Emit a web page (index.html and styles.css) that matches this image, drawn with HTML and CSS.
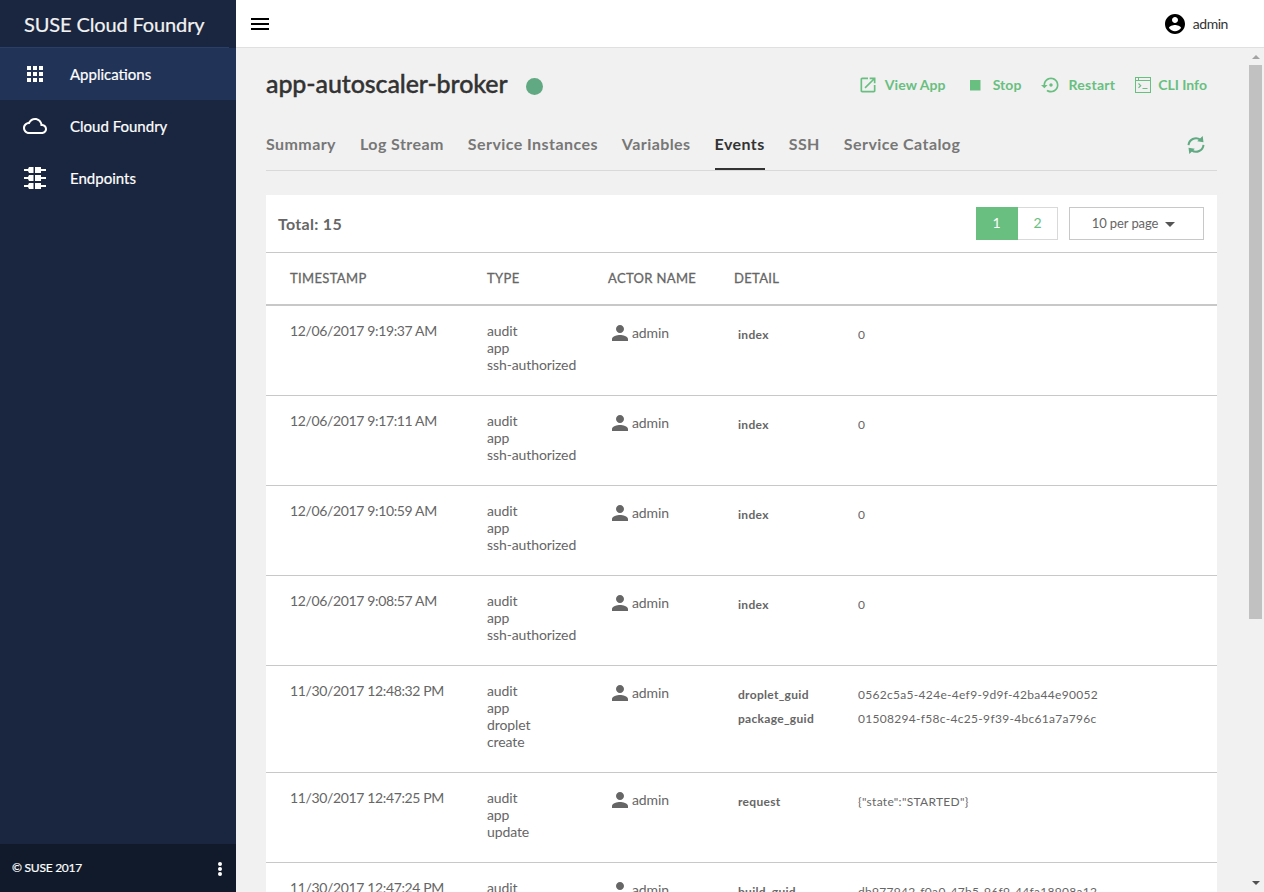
FILE: index.html
```html
<!DOCTYPE html>
<html lang="en">
<head>
<meta charset="utf-8">
<title>SUSE Cloud Foundry</title>
<link rel="stylesheet" href="styles.css">
</head>
<body>
<div class="app">
  <aside class="sidebar">
    <div class="brand">SUSE Cloud Foundry</div>
    <nav class="nav">
      <a class="nav-item active"><svg width="24" height="24" viewBox="0 0 24 24"><path fill="#fff" d="M4 4h4v4H4zM10 4h4v4h-4zM16 4h4v4h-4zM4 10h4v4H4zM10 10h4v4h-4zM16 10h4v4h-4zM4 16h4v4H4zM10 16h4v4h-4zM16 16h4v4h-4z"/></svg><span>Applications</span></a>
      <a class="nav-item"><svg width="24" height="24" viewBox="0 0 24 24"><path fill="#fff" d="M19.35 10.04C18.67 6.59 15.64 4 12 4 9.11 4 6.6 5.64 5.35 8.04 2.34 8.36 0 10.91 0 14c0 3.31 2.69 6 6 6h13c2.76 0 5-2.24 5-5 0-2.64-2.05-4.78-4.65-4.96zM19 18H6c-2.21 0-4-1.79-4-4s1.79-4 4-4h.71C7.37 7.69 9.48 6 12 6c3.04 0 5.5 2.46 5.5 5.5v.5H19c1.66 0 3 1.34 3 3s-1.34 3-3 3z"/></svg><span>Cloud Foundry</span></a>
      <a class="nav-item"><svg width="24" height="24" viewBox="0 0 24 24"><path fill="#fff" d="M1 3h4l1-2h4v6H6L5 5H1zM12 1h6v2h5v2h-5v2h-6zM1 11h4l1-2h4v6H6l-1-2H1zM12 9h6v2h5v2h-5v2h-6zM1 19h4l1-2h4v6H6l-1-2H1zM12 17h6v2h5v2h-5v2h-6z"/><path fill="#8d93a0" d="M10 1h1v6h-1zM10 9h1v6h-1zM10 17h1v6h-1z"/></svg><span>Endpoints</span></a>
    </nav>
    <footer class="side-foot"><span>© SUSE 2017</span><svg width="6" height="16" viewBox="0 0 6 16"><g fill="#fff"><circle cx="3" cy="3" r="2"/><circle cx="3" cy="8" r="2"/><circle cx="3" cy="13" r="2"/></g></svg></footer>
  </aside>
  <div class="main">
    <header class="topbar">
      <svg width="24" height="24" viewBox="0 0 24 24"><path d="M3 18h18v-2H3v2zm0-5h18v-2H3v2zm0-7v2h18V6H3z"/></svg>
      <div class="user"><svg width="24" height="24" viewBox="0 0 24 24"><path d="M12 2C6.48 2 2 6.48 2 12s4.48 10 10 10 10-4.48 10-10S17.52 2 12 2zm0 3c1.66 0 3 1.34 3 3s-1.34 3-3 3-3-1.34-3-3 1.34-3 3-3zm0 14.2c-2.5 0-4.71-1.28-6-3.22.03-1.99 4-3.08 6-3.08 1.99 0 5.97 1.09 6 3.08-1.29 1.94-3.5 3.22-6 3.22z"/></svg><span>admin</span></div>
    </header>
    <div class="body">
      <div class="content">
        <div class="title-row">
          <h1>app-autoscaler-broker</h1><span class="status"></span>
          <div class="actions">
            <a class="act view"><svg width="20" height="20" viewBox="0 0 24 24"><path d="M19 19H5V5h7V3H5c-1.11 0-2 .9-2 2v14c0 1.1.89 2 2 2h14c1.1 0 2-.9 2-2v-7h-2v7zM14 3v2h3.59l-9.83 9.83 1.41 1.41L19 6.41V10h2V3h-7z"/></svg><span>View App</span></a>
            <a class="act stop"><svg width="20" height="20" viewBox="0 0 20 20"><path d="M5 5h10.500v10.500H5z"/></svg><span>Stop</span></a>
            <a class="act restart"><svg width="20" height="20" viewBox="0 0 24 24"><path d="M14 12c0-1.100-.9-2-2-2s-2 .9-2 2 .9 2 2 2 2-.9 2-2zm-2-9c-4.970 0-9 4.030-9 9H0l4 4 4-4H5c0-3.870 3.130-7 7-7s7 3.130 7 7-3.130 7-7 7c-1.510 0-2.910-.49-4.060-1.300l-1.420 1.440C8.040 20.300 9.940 21 12 21c4.970 0 9-4.030 9-9s-4.030-9-9-9z"/></svg><span>Restart</span></a>
            <a class="act cli"><svg width="16" height="16" viewBox="0 0 16 16"><path fill-rule="evenodd" d="M0 0h16v16H0zM1 1v2h2V1zM4 1v2h11V1zM1 4v11h14V4z"/><path d="M3.500 6.500L5.700 8.700l-2.200 2.200M7.500 11.500h5" fill="none" stroke="#68bf80" stroke-width="1.200"/></svg><span>CLI Info</span></a>
          </div>
        </div>
        <div class="tabs">
          <a>Summary</a><a>Log Stream</a><a>Service Instances</a><a>Variables</a><a class="on">Events</a><a>SSH</a><a>Service Catalog</a>
          <svg class="refresh" width="18" height="18" viewBox="0 0 18 18"><g fill="none" stroke="#60a982" stroke-width="2"><path d="M1.500 9.200C2 3.500 8.500 .3 13.300 3.600M16.500 8.800C16 14.500 9.500 17.700 4.700 14.400"/></g><path fill="#60a982" d="M15.700 0l.8 6.200-6.300-.9zM2.300 18l-.8-6.200 6.300.9z"/></svg>
        </div>
        <section class="card">
          <div class="card-head">
            <span class="total">Total: 15</span>
            <div class="pager"><span class="pg cur">1</span><span class="pg">2</span></div>
            <div class="per"><span>10 per page</span><i class="caret"></i></div>
          </div>
          <div class="row thead"><span>TIMESTAMP</span><span>TYPE</span><span>ACTOR NAME</span><span>DETAIL</span></div>
          <div id="rows"></div>
        </section>
      </div>
      <div class="scrollbar"><i class="up"></i><i class="thumb"></i><i class="down"></i></div>
    </div>
  </div>
</div>
<script src="rows.js"></script>
</body>
</html>
```
FILE: rows.js
```js
const ssh = ["audit", "app", "ssh-authorized"];
const events = [
  ["12/06/2017 9:19:37 AM", ssh, [["index", "0"]]],
  ["12/06/2017 9:17:11 AM", ssh, [["index", "0"]]],
  ["12/06/2017 9:10:59 AM", ssh, [["index", "0"]]],
  ["12/06/2017 9:08:57 AM", ssh, [["index", "0"]]],
  ["11/30/2017 12:48:32 PM", ["audit", "app", "droplet", "create"], [["droplet_guid", "0562c5a5-424e-4ef9-9d9f-42ba44e90052"], ["package_guid", "01508294-f58c-4c25-9f39-4bc61a7a796c"]]],
  ["11/30/2017 12:47:25 PM", ["audit", "app", "update"], [["request", '{"state":"STARTED"}']]],
  ["11/30/2017 12:47:24 PM", ["audit"], [["build_guid", "db977942-f0a0-47b5-96f9-44fa18908a12"]]]
];
const person = '<svg width="24" height="24" viewBox="0 0 24 24"><path fill="#666" d="M12 12c2.210 0 4-1.790 4-4s-1.790-4-4-4-4 1.790-4 4 1.790 4 4 4zm0 2c-2.670 0-8 1.340-8 4v2h16v-2c0-2.660-5.330-4-8-4z"/></svg>';
document.getElementById("rows").innerHTML = events.map(([time, type, details]) => `
  <div class="row">
    <div class="time">${time}</div>
    <div class="type">${type.map(t => `<div>${t}</div>`).join("")}</div>
    <div class="actor">${person}<span>admin</span></div>
    <div class="detail">${details.map(([k, v]) => `<b>${k}</b><span>${v}</span>`).join("")}</div>
  </div>`).join("");
```
FILE: styles.css
```css
* { box-sizing: border-box; }
body { margin: 0; font-family: Lato, "Liberation Sans", sans-serif; color: #666; overflow: hidden; }
svg { flex: none; display: block; }
.app { display: flex; height: 892px; overflow: hidden; }

.sidebar { width: 236px; flex: none; background: #1a263f; color: #fff; display: flex; flex-direction: column; }
.brand { height: 48px; padding-left: 24px; width: 229px; border-bottom: 1px solid #2a3e6a; font-size: 20px; line-height: 49px; letter-spacing: -.13px; white-space: nowrap; color: #f2f2f2; -webkit-text-stroke: .2px; }
.nav { flex: 1; }
.nav-item { height: 52px; display: flex; align-items: center; gap: 23px; padding-left: 23px; font-size: 15px; -webkit-text-stroke: .2px; }
.nav-item.active { background: #223358; }
.side-foot { height: 48px; background: #111a2b; display: flex; align-items: center; justify-content: space-between; padding: 1px 13px 0 12px; font-size: 12px; letter-spacing: -.25px; -webkit-text-stroke: .2px; }
.side-foot span { margin-top: -2px; }

.main { flex: 1; display: flex; flex-direction: column; min-width: 0; }
.topbar { height: 48px; flex: none; background: #fff; border-bottom: 1px solid #e0e0e0; display: flex; align-items: center; justify-content: space-between; padding: 0 36px 0 12px; }
.user { display: flex; align-items: center; gap: 6px; font-size: 14px; letter-spacing: -.45px; color: #333; }
.body { flex: 1; min-height: 0; display: flex; background: #f1f1f1; }
.content { flex: 1; min-width: 0; padding: 0 30px; overflow: hidden; }

.title-row { display: flex; align-items: center; height: 74px; }
h1 { margin: -5px 0 0; font-size: 25px; font-weight: 500; letter-spacing: -.1px; color: #333; line-height: 30px; -webkit-text-stroke: .4px; }
.status { width: 17px; height: 17px; border-radius: 50%; background: #60a982; margin: 2px 0 0 18px; }
.actions { margin-left: auto; margin-right: 10px; display: flex; font-size: 14px; font-weight: 700; color: #68bf80; fill: #68bf80; }
.act { display: flex; align-items: center; }
.act span { white-space: nowrap; margin-top: -2px; }
.view { gap: 7px; letter-spacing: .1px; }
.stop { gap: 8px; margin-left: 19px; letter-spacing: .1px; }
.restart { gap: 8px; margin-left: 19px; letter-spacing: .25px; }
.cli { gap: 7px; margin-left: 20px; }

.tabs { height: 49px; border-bottom: 1px solid #d9d9d9; display: flex; gap: 24px; font-size: 16px; font-weight: 700; letter-spacing: .43px; color: #777; }
.tabs a { height: 48px; line-height: 43px; white-space: nowrap; }
.tabs .on { color: #333; border-bottom: 2px solid #333; }
.refresh { margin: 14px 12px 0 auto; }

.card { background: #fff; margin-top: 24px; }
.card-head { height: 57px; display: flex; align-items: center; padding: 0 13px 0 12px; }
.total { font-size: 16px; font-weight: 700; letter-spacing: .3px; margin-right: auto; }
.pager { display: flex; font-size: 14px; color: #68bf80; margin-right: 11px; }
.pg { width: 40px; height: 33px; line-height: 30px; text-align: center; border: 1px solid #d9d9d9; border-left: 0; }
.pg.cur { width: 42px; background: #68bf80; border-color: #68bf80; color: #fff; }
.per { width: 135px; height: 33px; border: 1px solid #c8c8c8; display: flex; align-items: center; justify-content: center; gap: 7px; font-size: 13px; letter-spacing: -.1px; padding-right: 6px; }
.per span { margin-top: -2px; }
.caret { border: 5px solid transparent; border-top-color: #555; border-bottom: 0; margin-top: 2px; }

.row { display: grid; grid-template-columns: 197px 121px 126px 1fr; padding: 17px 24px 21px; border-bottom: 1px solid #c8c8c8; font-size: 14px; line-height: 17px; }
.thead { border-top: 1px solid #c8c8c8; border-bottom: 2px solid #c8c8c8; padding: 17px 24px; height: 54px; font-size: 13px; letter-spacing: .35px; -webkit-text-stroke: .3px; }
.time, .type { margin: -1px 0 1px; }
.time { letter-spacing: -.36px; }
.type { letter-spacing: -.1px; }
.actor { display: flex; align-items: center; height: 24px; margin-top: -2px; }
.actor span { line-height: 22px; letter-spacing: -.1px; }
.detail { display: grid; grid-template-columns: 120px 1fr; grid-auto-rows: 24px; line-height: 24px; font-size: 12px; letter-spacing: .3px; padding-left: 4px; height: 24px; }

.scrollbar { width: 17px; flex: none; display: flex; flex-direction: column; align-items: center; background: #f1f1f1; padding-bottom: 7px; }
.up { border: 4px solid transparent; border-top: 0; border-bottom-color: #a3a3a3; margin: 7px 0 6px; }
.thumb { width: 13px; height: 554px; background: #c1c1c1; }
.down { border: 4px solid transparent; border-bottom: 0; border-top-color: #505050; margin-top: auto; }
```
